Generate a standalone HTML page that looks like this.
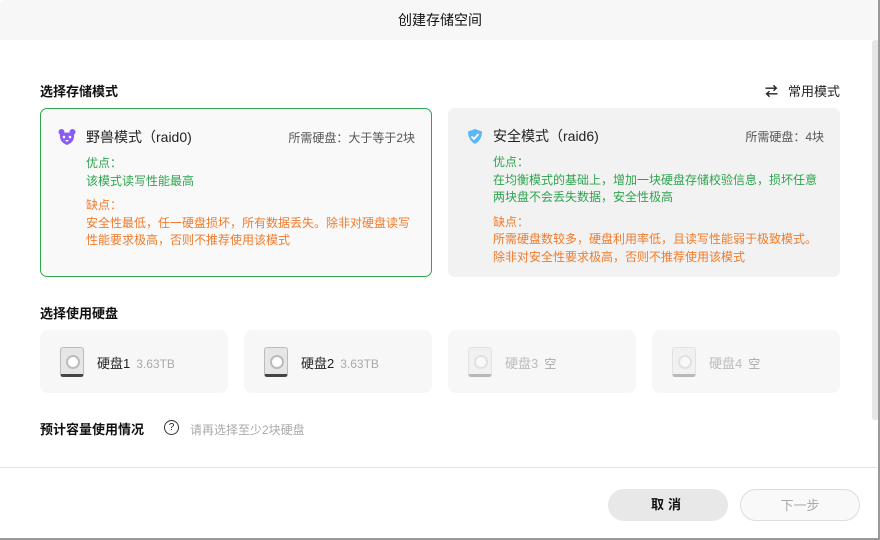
<!DOCTYPE html>
<html><head><meta charset="utf-8"><style>
*{margin:0;padding:0;box-sizing:border-box}
body{width:880px;height:540px;overflow:hidden;background:#fff;font-family:"Liberation Sans","Noto Sans CJK SC",sans-serif;color:#222;position:relative}
.hdr{position:absolute;left:0;top:0;width:880px;height:40px;background:#f7f7f7;border-radius:6px 6px 0 0;text-align:center;line-height:40px;font-size:14px;color:#111}
.abs{position:absolute}
.t{font-size:13px;font-weight:bold;color:#111}
.card{position:absolute;top:108px;width:392px;height:169px;border-radius:7px;background:#f9f9f9}
.card .ti{position:absolute;left:45px;top:18px;font-size:14px;color:#222}
.card .rq{position:absolute;right:16px;top:20px;font-size:12px;color:#555}
.card .bd{position:absolute;left:45px;top:46px;font-size:12px;line-height:17.5px}
.g{color:#2ea44f}.o{color:#f07b2c}
.disk{position:absolute;top:330px;width:188px;height:63px;border-radius:8px;background:#f7f7f7}
.disk .ic{position:absolute;left:20px;top:17px;width:24px;height:30px;border-radius:3px;background:#e6e6e6;border:1px solid #bbb;border-bottom:3px solid #444}
.disk .ic::after{content:"";position:absolute;left:5px;top:7px;width:10px;height:10px;border-radius:50%;border:2px solid #bbb;background:#fff}
.disk .nm{position:absolute;left:57px;top:23px;font-size:13px;color:#222}
.disk .nm span{font-size:12px;color:#aaa;margin-left:6px}
.disk.dim .ic{opacity:.35}.disk.dim .nm{color:#bbb}
.btn{position:absolute;top:489px;width:120px;height:32px;border-radius:16px;text-align:center;line-height:32px;font-size:13px}
</style></head><body>
<div class="hdr">创建存储空间</div>
<div class="abs" style="left:872px;top:40px;width:7px;height:380px;background:#e6e6e6;border-radius:3px"></div>
<div class="abs t" style="left:40px;top:81px">选择存储模式</div>
<div class="abs" style="right:40px;top:81px;font-size:13px;color:#222"><span style="font-weight:bold;margin-right:10px">⇄</span>常用模式</div>
<div class="card" style="left:40px;border:1px solid #2ea44f">
<svg class="abs" style="left:17px;top:19px" width="18" height="18" viewBox="0 0 18 18"><circle cx="3.5" cy="4" r="3" fill="#8a5cf5"/><circle cx="14.5" cy="4" r="3" fill="#8a5cf5"/><path d="M2 6 Q9 3 16 6 Q17 14 9 17 Q1 14 2 6Z" fill="#8a5cf5"/><circle cx="6" cy="9" r="1.3" fill="#fff"/><circle cx="12" cy="9" r="1.3" fill="#fff"/><path d="M7 12 L11 12 L9 14Z" fill="#fff"/></svg>
<div class="ti">野兽模式（raid0)</div><div class="rq">所需硬盘：大于等于2块</div>
<div class="bd"><div class="g">优点：</div><div class="g">该模式读写性能最高</div><div class="o" style="margin-top:7px">缺点：</div><div class="o">安全性最低，任一硬盘损坏，所有数据丢失。除非对硬盘读写<br>性能要求极高，否则不推荐使用该模式</div></div>
</div>
<div class="card" style="left:448px;background:#f2f2f2">
<svg class="abs" style="left:19px;top:20px" width="16" height="17" viewBox="0 0 16 17"><path d="M8 1 L15 3.5 Q15 12 8 16 Q1 12 1 3.5Z" fill="#5bb8f5"/><path d="M4.5 8.5 L7 11 L11.5 6" stroke="#fff" stroke-width="1.8" fill="none"/></svg>
<div class="ti">安全模式（raid6)</div><div class="rq">所需硬盘：4块</div>
<div class="bd"><div class="g">优点：</div><div class="g">在均衡模式的基础上，增加一块硬盘存储校验信息，损坏任意<br>两块盘不会丢失数据，安全性极高</div><div class="o" style="margin-top:7px">缺点：</div><div class="o">所需硬盘数较多，硬盘利用率低，且读写性能弱于极致模式。<br>除非对安全性要求极高，否则不推荐使用该模式</div></div>
</div>
<div class="abs t" style="left:40px;top:303px">选择使用硬盘</div>
<div class="disk" style="left:40px"><div class="ic"></div><div class="nm">硬盘1<span>3.63TB</span></div></div>
<div class="disk" style="left:244px"><div class="ic"></div><div class="nm">硬盘2<span>3.63TB</span></div></div>
<div class="disk dim" style="left:448px"><div class="ic"></div><div class="nm">硬盘3<span>空</span></div></div>
<div class="disk dim" style="left:652px"><div class="ic"></div><div class="nm">硬盘4<span>空</span></div></div>
<div class="abs t" style="left:40px;top:419px">预计容量使用情况</div>
<div class="abs" style="left:164px;top:420px;width:15px;height:15px;border:1.3px solid #333;border-radius:50%;font-size:10px;text-align:center;line-height:13px">?</div>
<div class="abs" style="left:190px;top:421px;font-size:12px;color:#aaa">请再选择至少2块硬盘</div>
<div class="abs" style="left:0;top:467px;width:878px;height:1px;background:#e6e6e6"></div>
<div class="btn" style="left:608px;background:#e8e8e8;font-weight:bold;color:#111;letter-spacing:4px">取消</div>
<div class="btn" style="left:740px;border:1px solid #ddd;background:#f9f9f9;color:#aaa">下一步</div>
<div class="abs" style="left:878px;top:0;width:2px;height:540px;background:#999"></div>
<div class="abs" style="left:0;top:538px;width:880px;height:2px;background:#999"></div>
</body></html>
